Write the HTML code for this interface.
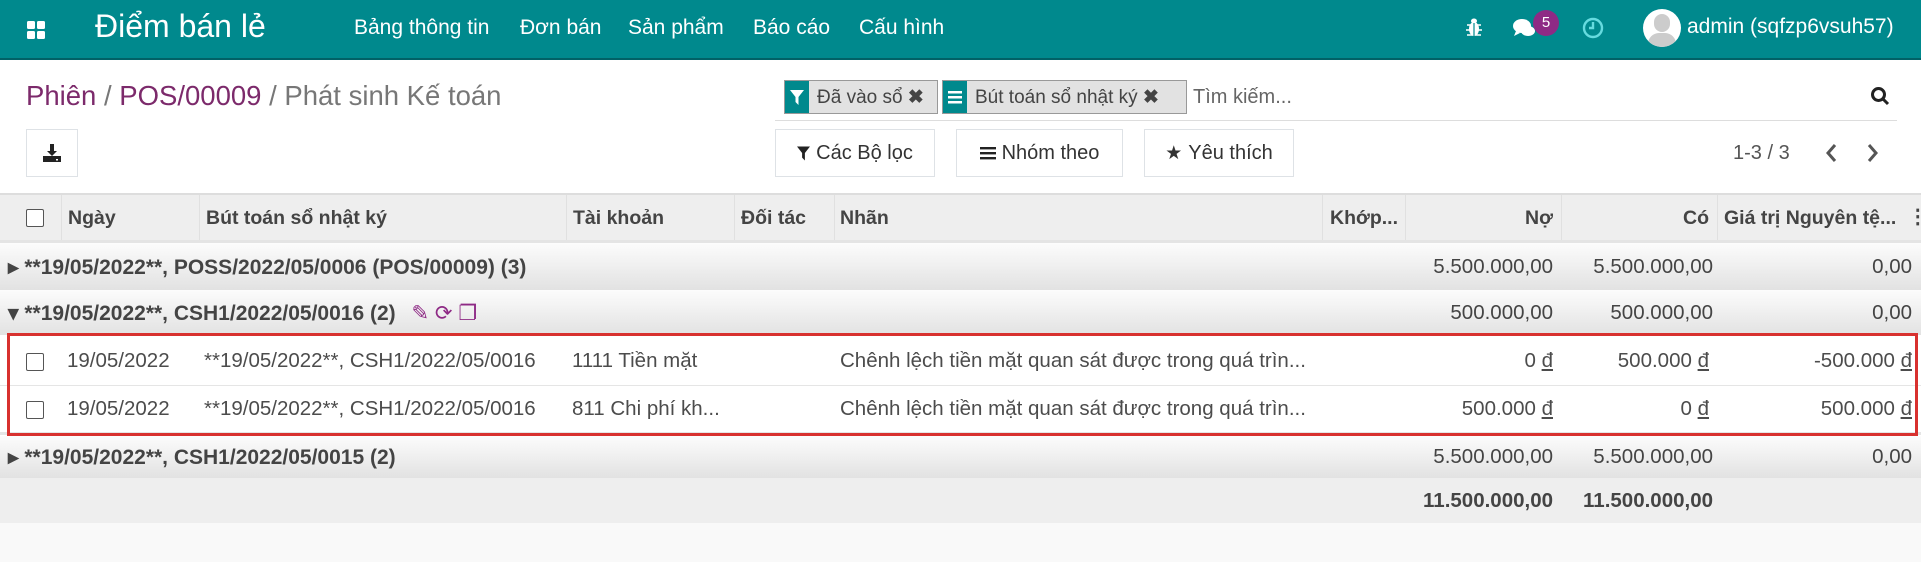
<!DOCTYPE html>
<html><head><meta charset="utf-8"><style>
*{box-sizing:border-box;margin:0;padding:0}
body{width:1921px;height:562px;overflow:hidden;background:#fff;font-family:"Liberation Sans",sans-serif;color:#4c4c4c;position:relative}
.a{position:absolute;white-space:nowrap}
.nav{position:absolute;left:0;top:0;width:1921px;height:60px;background:#00898d;border-bottom:2px solid #016166}
.nav .a{color:#fff}
.btn{position:absolute;border:1px solid #dee2e6;background:#fff;height:48px;top:129px;font-size:20px;color:#333;display:flex;align-items:center;justify-content:center;gap:6px}
.row{position:absolute;left:0;width:1921px;font-size:20.5px}
.grp{background:linear-gradient(#fcfcfc,#e2e2e2);font-weight:bold;color:#444;font-size:21px}
.grp .n{font-weight:normal;font-size:20.5px}
.r{text-align:right}
.cb{position:absolute;width:18px;height:18px;border:1.5px solid #555;background:#fff;border-radius:2px}
</style></head><body>
<div class="nav">
 <svg class="a" style="left:26px;top:20px" width="20" height="20" viewBox="0 0 20 20" fill="#fff"><rect x="1" y="1" width="8" height="8" rx="1.5"/><rect x="11" y="1" width="8" height="8" rx="1.5"/><rect x="1" y="11" width="8" height="8" rx="1.5"/><rect x="11" y="11" width="8" height="8" rx="1.5"/></svg>
 <div class="a" style="left:95px;top:8px;font-size:32px">Điểm bán lẻ</div>
 <div class="a" style="left:354px;top:16px;font-size:21px">Bảng thông tin</div>
 <div class="a" style="left:520px;top:16px;font-size:21px">Đơn bán</div>
 <div class="a" style="left:628px;top:16px;font-size:21px">Sản phẩm</div>
 <div class="a" style="left:753px;top:16px;font-size:21px">Báo cáo</div>
 <div class="a" style="left:859px;top:16px;font-size:21px">Cấu hình</div>
 <svg class="a" style="left:1466px;top:17px" width="16" height="20" viewBox="0 0 16 20" fill="#fff"><ellipse cx="8" cy="4" rx="3" ry="2.5"/><ellipse cx="8" cy="12" rx="5" ry="7"/><path d="M1 8h14M0 13h16M1 18h14" stroke="#fff" stroke-width="1.5"/><path d="M8 6v13" stroke="#00898d" stroke-width="1.2"/></svg>
 <svg class="a" style="left:1512px;top:17px" width="26" height="24" viewBox="0 0 26 24" fill="#fff"><ellipse cx="10" cy="9" rx="9" ry="7"/><path d="M4 14l-2 5 6-3z"/><ellipse cx="16" cy="14" rx="7" ry="5"/></svg>
 <div class="a" style="left:1533px;top:10px;width:26px;height:26px;border-radius:13px;background:#8e2a85;color:#fff;font-size:15px;text-align:center;line-height:26px">5</div>
 <svg class="a" style="left:1581px;top:16px" width="24" height="24" viewBox="0 0 24 24" fill="none" stroke="#66dbdf" stroke-width="2.4"><circle cx="12" cy="12" r="9"/><path d="M12 6v6h-4"/></svg>
 <div class="a" style="left:1643px;top:9px;width:38px;height:38px;border-radius:19px;background:#fff;overflow:hidden"><div style="position:absolute;left:11px;top:5px;width:16px;height:18px;border-radius:8px;background:#ccc"></div><div style="position:absolute;left:5px;top:24px;width:28px;height:22px;border-radius:14px;background:#ccc"></div></div>
 <div class="a" style="left:1687px;top:15px;font-size:21px">admin (sqfzp6vsuh57)</div>
</div>
<div class="a" style="left:26px;top:80px;font-size:27.5px;color:#7c2a6b">Phiên <span style="color:#777">/</span> POS/00009 <span style="color:#777">/ Phát sinh Kế toán</span></div>
<div class="a" style="left:784px;top:80px;width:154px;height:34px;background:#e2e2e2;border:1px solid #999;font-size:19px;color:#444">
 <div style="position:absolute;left:0;top:0;width:24px;height:32px;background:#00898d"></div>
 <svg style="position:absolute;left:5px;top:9px" width="14" height="15" viewBox="0 0 14 15" fill="#fff"><path d="M0 0h14L8.5 7v8L5.5 12V7z"/></svg>
 <span style="position:absolute;left:32px;top:5px">Đã vào sổ <b>✖</b></span></div>
<div class="a" style="left:942px;top:80px;width:245px;height:34px;background:#e2e2e2;border:1px solid #999;font-size:19px;color:#444">
 <div style="position:absolute;left:0;top:0;width:24px;height:32px;background:#00898d"></div>
 <svg style="position:absolute;left:5px;top:9px" width="14" height="15" viewBox="0 0 14 15" fill="#fff"><rect y="1" width="14" height="2.5"/><rect y="6" width="14" height="2.5"/><rect y="11" width="14" height="2.5"/></svg>
 <span style="position:absolute;left:32px;top:5px">Bút toán sổ nhật ký <b>✖</b></span></div>
<div class="a" style="left:1193px;top:86px;font-size:20px;color:#666">Tìm kiếm...</div>
<svg class="a" style="left:1870px;top:86px" width="20" height="20" viewBox="0 0 20 20" fill="none" stroke="#222" stroke-width="3"><circle cx="8.5" cy="8.5" r="6"/><path d="M13 13l5 5"/></svg>
<div class="a" style="left:775px;top:120px;width:1122px;height:1px;background:#ddd"></div>
<div class="btn" style="left:26px;width:52px"><svg width="18" height="18" viewBox="0 0 18 18" fill="#222"><path d="M7 0h4v7h3l-5 5-5-5h3z"/><rect x="0" y="12" width="18" height="6"/><rect x="13" y="15" width="2" height="1.5" fill="#fff"/></svg></div>
<div class="btn" style="left:775px;width:160px"><svg width="13" height="15" viewBox="0 0 14 15" fill="#222"><path d="M0 0h14L8.5 7v8L5.5 12V7z"/></svg>Các Bộ lọc</div>
<div class="btn" style="left:956px;width:167px"><svg width="16" height="14" viewBox="0 0 16 14" fill="#222"><rect y="1" width="16" height="2.4"/><rect y="6" width="16" height="2.4"/><rect y="11" width="16" height="2.4"/></svg>Nhóm theo</div>
<div class="btn" style="left:1144px;width:150px"><span style="font-size:19px">★</span>Yêu thích</div>
<div class="a" style="left:1733px;top:142px;font-size:20px;color:#555">1-3 / 3</div>
<svg class="a" style="left:1824px;top:143px" width="14" height="20" viewBox="0 0 14 20" fill="none" stroke="#555" stroke-width="3"><path d="M11 2L4 10l7 8"/></svg>
<svg class="a" style="left:1866px;top:143px" width="14" height="20" viewBox="0 0 14 20" fill="none" stroke="#555" stroke-width="3"><path d="M3 2l7 8-7 8"/></svg>

<div class="row" style="top:193px;height:50px;background:#eee;border-top:2px solid #ddd;border-bottom:3px solid #e4e4e4;font-weight:bold;color:#444;font-size:19.5px">
 <div class="cb" style="left:26px;top:14px"></div>
 <div class="a" style="left:68px;top:12px">Ngày</div>
 <div class="a" style="left:206px;top:12px">Bút toán sổ nhật ký</div>
 <div class="a" style="left:573px;top:12px">Tài khoản</div>
 <div class="a" style="left:741px;top:12px">Đối tác</div>
 <div class="a" style="left:840px;top:12px">Nhãn</div>
 <div class="a" style="left:1330px;top:12px">Khớp...</div>
 <div class="a r" style="left:1405px;width:148px;top:12px">Nợ</div>
 <div class="a r" style="left:1561px;width:148px;top:12px">Có</div>
 <div class="a" style="left:1724px;top:12px">Giá trị Nguyên tệ...</div>
 <div class="a" style="left:1908px;top:10px">⋮</div>
 <div class="a" style="left:61px;top:0;width:1px;height:45px;background:#e0e0e0"></div>
 <div class="a" style="left:199px;top:0;width:1px;height:45px;background:#e0e0e0"></div>
 <div class="a" style="left:566px;top:0;width:1px;height:45px;background:#e0e0e0"></div>
 <div class="a" style="left:734px;top:0;width:1px;height:45px;background:#e0e0e0"></div>
 <div class="a" style="left:834px;top:0;width:1px;height:45px;background:#e0e0e0"></div>
 <div class="a" style="left:1322px;top:0;width:1px;height:45px;background:#e0e0e0"></div>
 <div class="a" style="left:1405px;top:0;width:1px;height:45px;background:#e0e0e0"></div>
 <div class="a" style="left:1561px;top:0;width:1px;height:45px;background:#e0e0e0"></div>
 <div class="a" style="left:1717px;top:0;width:1px;height:45px;background:#e0e0e0"></div>
</div>
<div class="row grp" style="top:243px;height:47px">
 <div class="a" style="left:8px;top:12px">▸ **19/05/2022**, POSS/2022/05/0006 (POS/00009) (3)</div>
 <div class="a r n" style="left:1380px;width:173px;top:12px">5.500.000,00</div>
 <div class="a r n" style="left:1540px;width:173px;top:12px">5.500.000,00</div>
 <div class="a r n" style="left:1717px;width:195px;top:12px">0,00</div>
</div>
<div class="row grp" style="top:290px;height:45px">
 <div class="a" style="left:8px;top:11px">▾ **19/05/2022**, CSH1/2022/05/0016 (2) <span style="color:#8e2a85;margin-left:10px;font-weight:normal">✎ ⟳ ❐</span></div>
 <div class="a r n" style="left:1380px;width:173px;top:11px">500.000,00</div>
 <div class="a r n" style="left:1540px;width:173px;top:11px">500.000,00</div>
 <div class="a r n" style="left:1717px;width:195px;top:11px">0,00</div>
</div>
<div class="row" style="top:335px;height:51px;background:#fff;border-bottom:1px solid #e5e5e5">
 <div class="cb" style="left:26px;top:18px"></div>
 <div class="a" style="left:67px;top:14px">19/05/2022</div>
 <div class="a" style="left:204px;top:14px">**19/05/2022**, CSH1/2022/05/0016</div>
 <div class="a" style="left:572px;top:14px">1111 Tiền mặt</div>
 <div class="a" style="left:840px;top:14px">Chênh lệch tiền mặt quan sát được trong quá trìn...</div>
 <div class="a r" style="left:1405px;width:148px;top:14px">0 <u>đ</u></div>
 <div class="a r" style="left:1561px;width:148px;top:14px">500.000 <u>đ</u></div>
 <div class="a r" style="left:1717px;width:195px;top:14px">-500.000 <u>đ</u></div>
</div>
<div class="row" style="top:386px;height:49px;background:#fff;border-bottom:3px solid #e5e5e5">
 <div class="cb" style="left:26px;top:15px"></div>
 <div class="a" style="left:67px;top:11px">19/05/2022</div>
 <div class="a" style="left:204px;top:11px">**19/05/2022**, CSH1/2022/05/0016</div>
 <div class="a" style="left:572px;top:11px">811 Chi phí kh...</div>
 <div class="a" style="left:840px;top:11px">Chênh lệch tiền mặt quan sát được trong quá trìn...</div>
 <div class="a r" style="left:1405px;width:148px;top:11px">500.000 <u>đ</u></div>
 <div class="a r" style="left:1561px;width:148px;top:11px">0 <u>đ</u></div>
 <div class="a r" style="left:1717px;width:195px;top:11px">500.000 <u>đ</u></div>
</div>
<div class="a" style="left:7px;top:333px;width:1911px;height:103px;border:3px solid #d8312f"></div>
<div class="row grp" style="top:436px;height:42px">
 <div class="a" style="left:8px;top:9px">▸ **19/05/2022**, CSH1/2022/05/0015 (2)</div>
 <div class="a r n" style="left:1380px;width:173px;top:9px">5.500.000,00</div>
 <div class="a r n" style="left:1540px;width:173px;top:9px">5.500.000,00</div>
 <div class="a r n" style="left:1717px;width:195px;top:9px">0,00</div>
</div>
<div class="row" style="top:478px;height:45px;background:#eee;font-weight:bold;color:#444">
 <div class="a r" style="left:1380px;width:173px;top:11px">11.500.000,00</div>
 <div class="a r" style="left:1540px;width:173px;top:11px">11.500.000,00</div>
</div>
<div class="row" style="top:523px;height:39px;background:#f9f9f9"></div>
</body></html>
